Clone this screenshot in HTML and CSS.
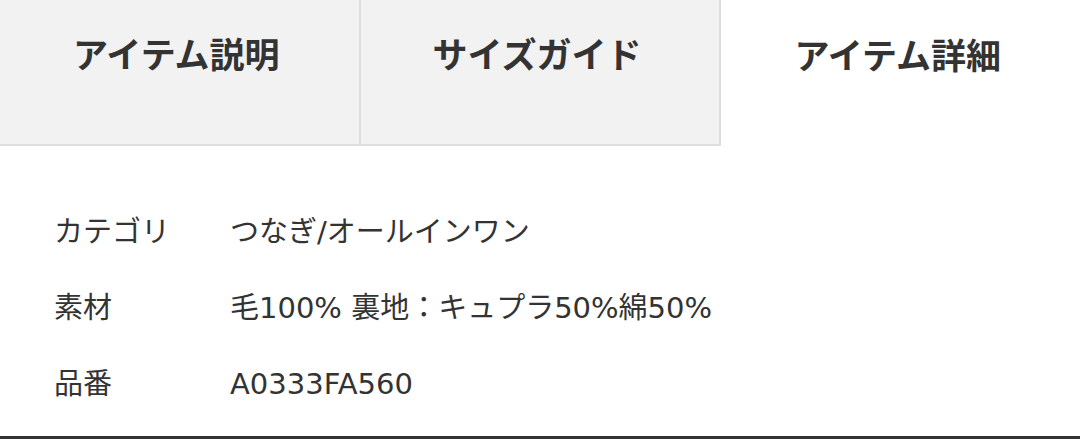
FILE: index.html
```html
<!DOCTYPE html>
<html lang="ja">
<head>
  <meta charset="UTF-8" />
  <title>アイテム詳細</title>
  <link rel="stylesheet" href="styles.css">
</head>
<body>

  <!-- タブ -->
  <div class="tabs">
    <div class="tab">アイテム説明</div>
    <div class="tab">サイズガイド</div>
    <div class="tab activa">アイテム詳細</div>
  </div>

  <!-- 詳細 -->
  <div class="detalle">
    <div class="fila">
      <span class="etiqueta">カテゴリ</span>
      <span class="valor">つなぎ/オールインワン</span>
    </div>
    <div class="fila">
      <span class="etiqueta">素材</span>
      <span class="valor">毛100% 裏地：キュプラ50%綿50%</span>
    </div>
    <div class="fila">
      <span class="etiqueta">品番</span>
      <span class="valor">A0333FA560</span>
    </div>
  </div>

  <div class="linea"></div>

</body>
</html>
```

FILE: styles.css
```css
body {
  font-family: 'DejaVu Sans', 'Noto Sans CJK JP', sans-serif;
  background-color: #fff;
  color: #333;
  margin: 0;
  width: 1080px;
  height: 439px;
  display: flex;
  flex-direction: column;
}

.tabs {
  display: flex;
  height: 146px;
}

.tab {
  flex: 1;
  display: flex;
  align-items: center;
  justify-content: center;
  padding: 0 6px 40px 0;
  box-sizing: border-box;
  background-color: #f2f2f2;
  border-right: 2px solid #dedede;
  border-bottom: 2px solid #dedede;
  font-family: 'Noto Sans CJK JP', sans-serif;
  font-size: 35px;
  font-weight: bold;
  color: #333;
}

.tab.activa {
  background-color: #fff;
  border: none;
}

.detalle {
  flex: 1;
  padding: 56px 0 0 54px;
}

.fila {
  display: flex;
  height: 76px;
  align-items: flex-start;
  font-size: 29px;
  line-height: 60px;
}

.etiqueta {
  width: 176px;
}

.linea {
  height: 3px;
  background-color: #333;
}
```
